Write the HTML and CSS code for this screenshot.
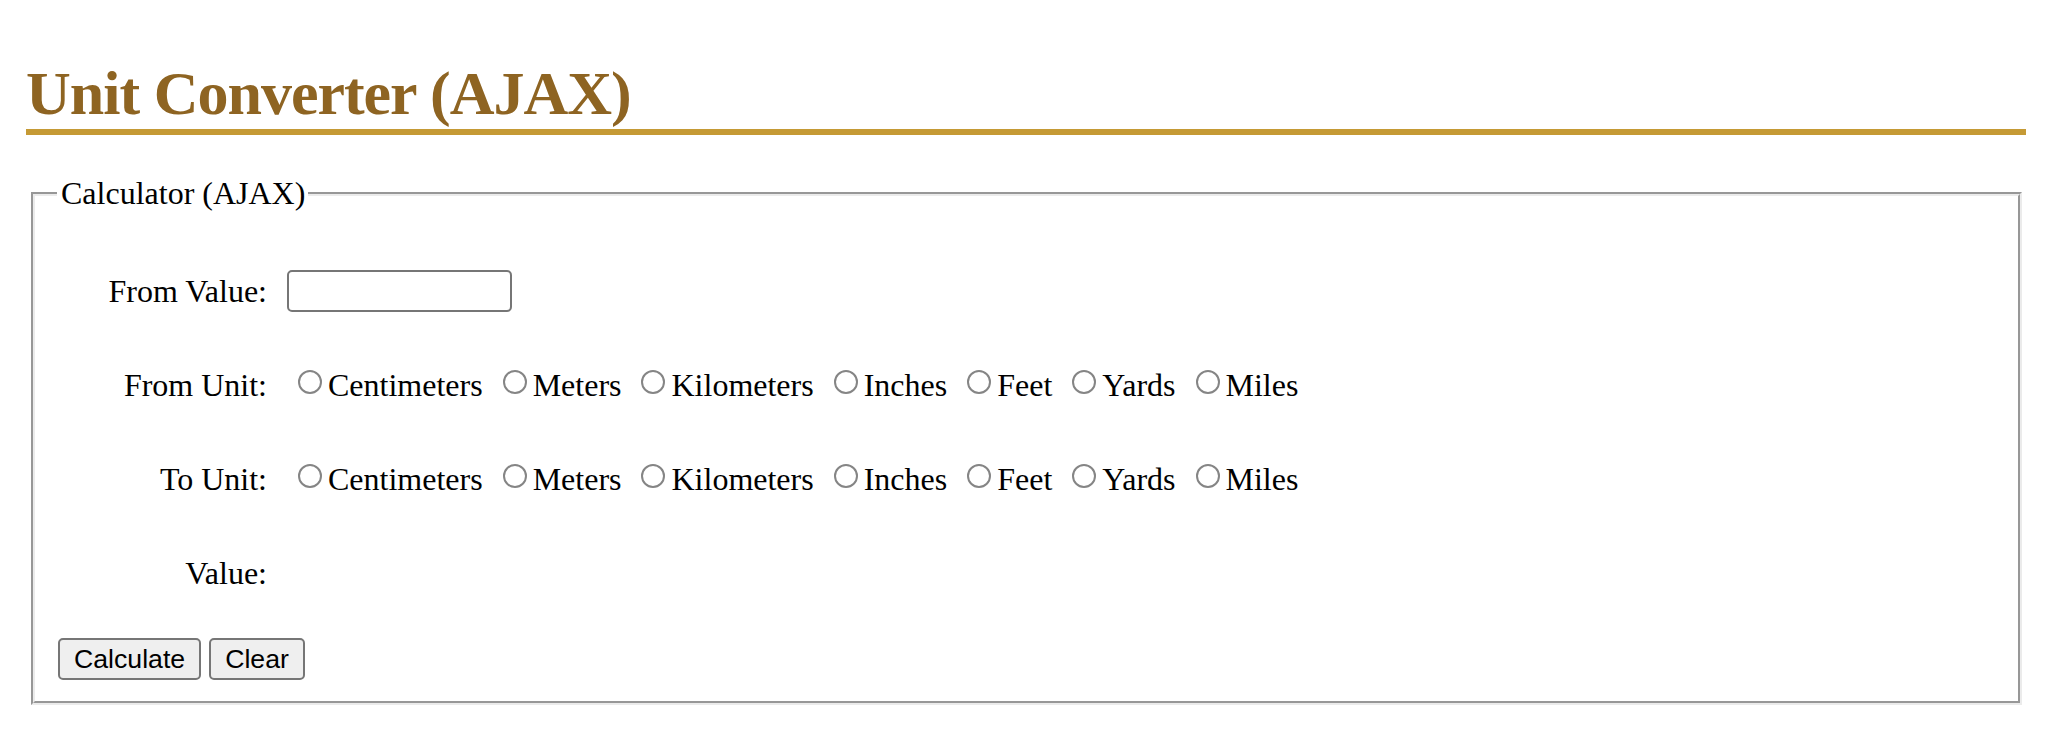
FILE: index.html
```html
<!DOCTYPE html>
<html lang="en">
<head>
<meta charset="utf-8">
<title>Unit Converter (AJAX)</title>
<link rel="stylesheet" href="styles.css">
</head>
<body>
<div class="page">
  <h1 class="title">Unit Converter (AJAX)</h1>
  <fieldset class="calc">
    <legend class="calc-legend">Calculator (AJAX)</legend>
    <div class="form-grid">
      <label class="field-label" for="fromValue">From Value:</label>
      <div class="field"><input type="text" id="fromValue" class="text-input"></div>

      <span class="field-label">From Unit:</span>
      <div class="field options">
        <label class="opt"><input type="radio" name="fromUnit" class="radio">Centimeters</label>
        <label class="opt"><input type="radio" name="fromUnit" class="radio">Meters</label>
        <label class="opt"><input type="radio" name="fromUnit" class="radio">Kilometers</label>
        <label class="opt"><input type="radio" name="fromUnit" class="radio">Inches</label>
        <label class="opt"><input type="radio" name="fromUnit" class="radio">Feet</label>
        <label class="opt"><input type="radio" name="fromUnit" class="radio">Yards</label>
        <label class="opt"><input type="radio" name="fromUnit" class="radio">Miles</label>
      </div>

      <span class="field-label">To Unit:</span>
      <div class="field options">
        <label class="opt"><input type="radio" name="toUnit" class="radio">Centimeters</label>
        <label class="opt"><input type="radio" name="toUnit" class="radio">Meters</label>
        <label class="opt"><input type="radio" name="toUnit" class="radio">Kilometers</label>
        <label class="opt"><input type="radio" name="toUnit" class="radio">Inches</label>
        <label class="opt"><input type="radio" name="toUnit" class="radio">Feet</label>
        <label class="opt"><input type="radio" name="toUnit" class="radio">Yards</label>
        <label class="opt"><input type="radio" name="toUnit" class="radio">Miles</label>
      </div>

      <span class="field-label">Value:</span>
      <div class="field result"></div>
    </div>
    <div class="actions">
      <button type="button" class="btn">Calculate</button>
      <button type="button" class="btn">Clear</button>
    </div>
  </fieldset>
</div>
</body>
</html>
```
FILE: styles.css
```css
html, body {
  margin: 0;
  padding: 0;
  background: #ffffff;
}

body {
  font-family: "Liberation Serif", "Times New Roman", serif;
  font-size: 32px;
  color: #000000;
}

.page {
  margin-left: 26px;
  width: 2000px;
}

.title {
  margin: 58px 0 0 0;
  padding: 0;
  font-family: "Liberation Serif", "Times New Roman", serif;
  font-size: 62px;
  font-weight: bold;
  letter-spacing: -1px;
  line-height: normal;
  color: #8e6422;
  border-bottom: 6px solid #c59a35;
}

.calc {
  margin: 40px 4px 0 5px;
  padding: 32px 24px 21px 23px;
  border: 4px groove #ebebeb;
  min-width: 0;
}

.calc-legend {
  padding: 0 3px 0 4px;
  margin-left: -1px;
  font-size: 32px;
  line-height: normal;
}

.form-grid {
  display: grid;
  grid-template-columns: 209px 1fr;
  column-gap: 20px;
  grid-auto-rows: 94px;
  align-items: center;
}

.field-label {
  text-align: right;
  line-height: normal;
}

.field {
  line-height: normal;
}

.text-input {
  box-sizing: border-box;
  width: 225px;
  height: 42px;
  margin: 0;
  padding: 2px 4px;
  border: 2px solid #767676;
  border-radius: 5px;
  background: #ffffff;
  font-family: "Liberation Sans", Arial, sans-serif;
  font-size: 26px;
  vertical-align: middle;
}

.options {
  white-space: nowrap;
}

.opt {
  white-space: nowrap;
}

.radio {
  -webkit-appearance: none;
  appearance: none;
  box-sizing: border-box;
  width: 24px;
  height: 24px;
  margin: 0 6px 0 11px;
  padding: 0;
  border: 2px solid #858585;
  border-radius: 50%;
  background: #ffffff;
  vertical-align: baseline;
  position: relative;
  top: -2px;
}

.opt + .opt {
  margin-left: 1px;
}

.actions {
  display: flex;
  gap: 8px;
  margin-top: 18px;
}

.btn {
  box-sizing: border-box;
  margin: 0;
  padding: 4px 14px;
  height: 42px;
  border: 2px solid #767676;
  border-radius: 5px;
  background: #efefef;
  color: #000000;
  font-family: "Liberation Sans", Arial, sans-serif;
  font-size: 26.67px;
  line-height: 30px;
}
```
